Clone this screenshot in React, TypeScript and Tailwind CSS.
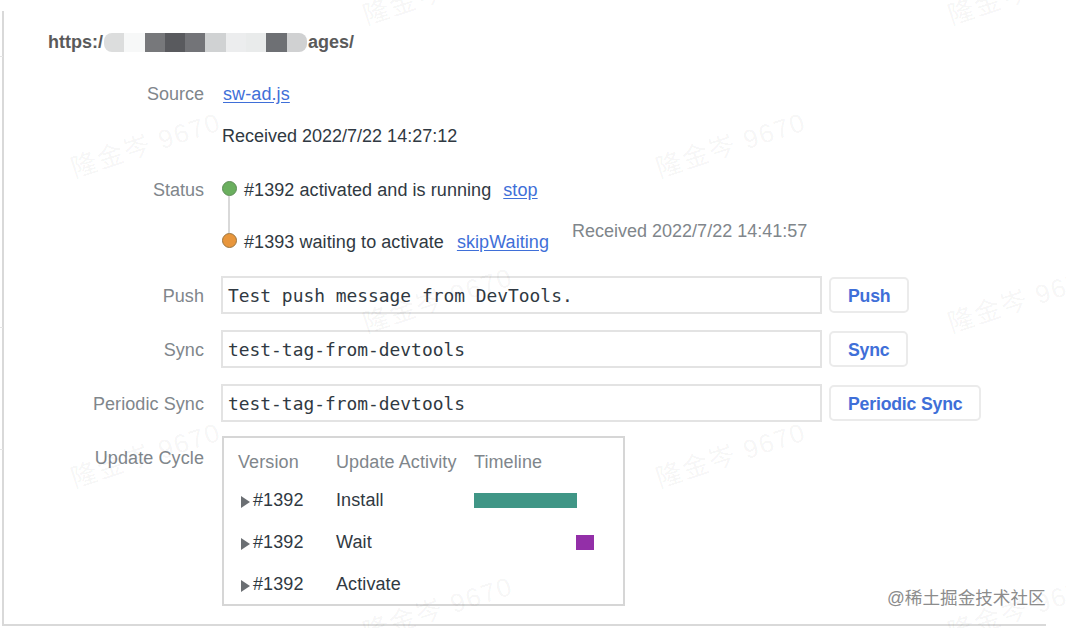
const sans = "font-['Liberation_Sans',Arial,sans-serif]";

function Watermark({ cls }: { cls: string }) {
  return (
    <div className={`absolute ${cls} -rotate-[18deg] whitespace-nowrap text-[26px] leading-none tracking-[1.6px] text-black/[0.05] font-['Liberation_Sans','Noto_Sans_CJK_SC',sans-serif]`}>
      隆金岑 9670
    </div>
  );
}

function Row({ label, cls, labelCls, children }: { label: string; cls: string; labelCls?: string; children: React.ReactNode }) {
  return (
    <div className={`flex ${cls}`}>
      <div className={`w-[200px] shrink-0 text-right text-[#80868b] ${labelCls ?? ""}`}>{label}</div>
      <div className="ml-[17px] flex-1">{children}</div>
    </div>
  );
}

function FormRow({ label, value, button }: { label: string; value: string; button: string }) {
  return (
    <div className="flex h-[38px] items-center">
      <div className="w-[200px] shrink-0 pt-[2px] text-right tracking-[0.08px] text-[#80868b]">{label}</div>
      <div className="ml-[17px] flex h-[38px] w-[601px] items-center border-2 border-[#e3e3e3] pl-[5px] pt-[2px] text-[17.9px] text-[#303942] font-['DejaVu_Sans_Mono',monospace]">
        {value}
      </div>
      <div className="ml-[7px] flex h-[36px] items-center rounded-[5px] border-2 border-[#ebebeb] px-[17px] pt-[2px] text-[17.7px] font-bold tracking-[-0.2px] text-[#3f6fd8]">
        {button}
      </div>
    </div>
  );
}

function Activity({ name, bar }: { name: string; bar?: React.ReactNode }) {
  return (
    <div className="flex h-[42px] items-center text-[#303942]">
      <div className="flex w-[98px] items-center">
        <svg width="9" height="12" viewBox="0 0 9 12" className="ml-[3px] mt-[3px]">
          <path d="M0 0 L9 6 L0 12 Z" fill="#6b6f73" />
        </svg>
        <span className="ml-[3px]">#1392</span>
      </div>
      <div className="w-[138px]">{name}</div>
      <div className="flex-1">{bar}</div>
    </div>
  );
}

export default function App() {
  const blocks = [
    "bg-[#dcdddd] rounded-l-[8px]",
    "bg-[#f7f8f8]",
    "bg-[#77787b]",
    "bg-[#595a5e]",
    "bg-[#737478]",
    "bg-[#d0d2d3]",
    "bg-[#ecedee]",
    "bg-[#e9ebeb]",
    "bg-[#6e7074]",
    "bg-[#d0d1d2] rounded-r-[8px]",
  ];
  return (
    <div className={`relative h-[628px] w-[1066px] overflow-hidden bg-white text-[18px] leading-[24px] ${sans}`}>
      <div className="ml-[2px] mt-[11px] h-[615px] w-[1044px] border-b-2 border-l-2 border-[#d9d9d9]">
        <div className="flex h-[60px] items-center pl-[44px] pt-[2px] text-[18px] font-bold text-[#5a5a5a]">
          <span>https:/</span>
          <div className="ml-[1px] flex h-[19px]">
            {blocks.map((b, i) => (
              <div key={i} className={`h-full w-[20.3px] ${b}`} />
            ))}
          </div>
          <span className="ml-[1px]">ages/</span>
        </div>

        <Row label="Source" cls="mt-[11px]">
          <span className="ml-[2px] tracking-[0.1px] text-[#3f6fd8] underline underline-offset-2">sw-ad.js</span>
        </Row>
        <Row label="" cls="mt-[18px]">
          <span className="ml-[1px] text-[#303942]">Received 2022/7/22 14:27:12</span>
        </Row>

        <Row label="Status" cls="mt-[30px]">
          <div className="flex">
            <div className="-ml-[3px] flex w-[23px] flex-col items-center pt-[3px]">
              <div className="h-[15px] w-[15px] rounded-full border border-[#5f8d58] bg-[#6aaf5e]" />
              <div className="-ml-[2px] h-[37px] w-[2px] bg-[#d9d9d9]" />
              <div className="h-[15px] w-[15px] rounded-full border border-[#9c7640] bg-[#e8963c]" />
            </div>
            <div className="ml-[3px] tracking-[0.07px] text-[#303942]">
              <div className="flex">
                <span>#1392 activated and is running</span>
                <span className="ml-[12px] text-[#3f6fd8] underline underline-offset-2">stop</span>
              </div>
              <div className="mt-[28px] flex">
                <span>#1393 waiting to activate</span>
                <span className="ml-[13px] text-[#3f6fd8] underline underline-offset-2">skipWaiting</span>
              </div>
            </div>
            <div className="ml-[23px] mt-[41px] text-[#80868b]">Received 2022/7/22 14:41:57</div>
          </div>
        </Row>

        <div className="mt-[22px] flex flex-col gap-[16px]">
          <FormRow label="Push" value="Test push message from DevTools." button="Push" />
          <FormRow label="Sync" value="test-tag-from-devtools" button="Sync" />
          <FormRow label="Periodic Sync" value="test-tag-from-devtools" button="Periodic Sync" />
        </div>

        <Row label="Update Cycle" cls="mt-[14px] tracking-[0.1px]" labelCls="pt-[10px]">
          <div className="ml-[1px] h-[170px] w-[403px] border-2 border-[#d6d6d6] pl-[14px] pt-[12px]">
            <div className="flex h-[24px] items-center text-[#80868b]">
              <div className="w-[98px]">Version</div>
              <div className="w-[138px]">Update Activity</div>
              <div>Timeline</div>
            </div>
            <div className="mt-[5px]">
              <Activity name="Install" bar={<div className="h-[15px] w-[103px] bg-[#409686]" />} />
              <Activity name="Wait" bar={<div className="ml-[102px] h-[15px] w-[18px] bg-[#932fa8]" />} />
              <Activity name="Activate" />
            </div>
          </div>
        </Row>
      </div>

      <div className="absolute left-0 top-[56px] h-[1px] w-[3px] bg-[#e5e5e5]" />
      <div className="absolute left-0 top-[327px] h-[1px] w-[3px] bg-[#e5e5e5]" />
      <div className="absolute left-0 top-[449px] h-[1px] w-[3px] bg-[#e5e5e5]" />

      <Watermark cls="left-[68px] top-[132px]" />
      <Watermark cls="left-[653px] top-[132px]" />
      <Watermark cls="left-[360px] top-[-21px]" />
      <Watermark cls="left-[945px] top-[-21px]" />
      <Watermark cls="left-[360px] top-[287px]" />
      <Watermark cls="left-[945px] top-[287px]" />
      <Watermark cls="left-[68px] top-[442px]" />
      <Watermark cls="left-[653px] top-[442px]" />
      <Watermark cls="left-[360px] top-[596px]" />
      <Watermark cls="left-[945px] top-[596px]" />

      <div className="absolute left-[887px] top-[586px] whitespace-nowrap text-[17.6px] leading-[24px] text-[#8c8c8c] font-['Liberation_Sans','Noto_Sans_CJK_SC',sans-serif]">
        @稀土掘金技术社区
      </div>
    </div>
  );
}
